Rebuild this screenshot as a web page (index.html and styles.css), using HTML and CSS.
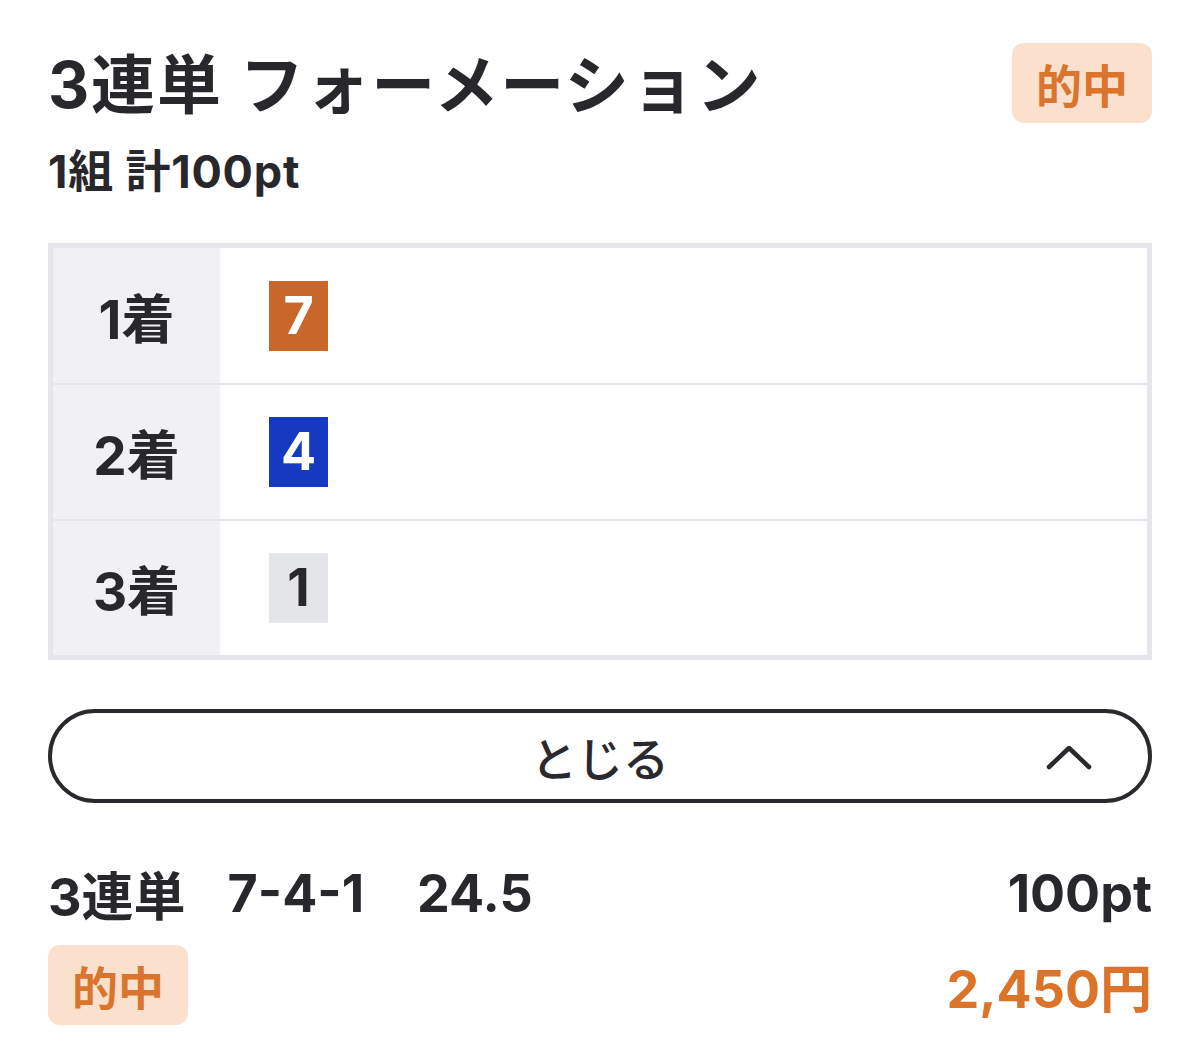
FILE: index.html
```html
<!DOCTYPE html>
<html lang="ja">
<head>
<meta charset="utf-8">
<title>3連単 フォーメーション</title>
<link rel="stylesheet" href="styles.css">
</head>
<body>
<div class="page">
  <div class="head">
    <div class="head-text">
      <h1 class="title">3連単 フォーメーション</h1>
      <p class="sub">1組 計100pt</p>
    </div>
    <span class="badge">的中</span>
  </div>

  <div class="table">
    <div class="row">
      <div class="label">1着</div>
      <div class="cell"><span class="num num-orange">7</span></div>
    </div>
    <div class="row">
      <div class="label">2着</div>
      <div class="cell"><span class="num num-blue">4</span></div>
    </div>
    <div class="row">
      <div class="label">3着</div>
      <div class="cell"><span class="num num-gray">1</span></div>
    </div>
  </div>

  <button class="toggle" type="button">
    <span class="toggle-text">とじる</span>
    <svg class="chev" width="46" height="28" viewBox="0 0 46 28" aria-hidden="true">
      <path d="M3 24 L23 5 L43 24" fill="none" stroke="#2a2a2e" stroke-width="4.5" stroke-linecap="round" stroke-linejoin="round"/>
    </svg>
  </button>

  <div class="result">
    <div class="result-line">
      <span class="r-type">3連単</span>
      <span class="r-combo">7-4-1</span>
      <span class="r-odds">24.5</span>
      <span class="r-pt">100pt</span>
    </div>
    <div class="result-line2">
      <span class="badge">的中</span>
      <span class="payout">2,450円</span>
    </div>
  </div>
</div>
</body>
</html>
```

FILE: styles.css
```css
* { box-sizing: border-box; }
html, body { margin: 0; padding: 0; background: #ffffff; }
body {
  font-family: "Inter", "Noto Sans CJK JP", sans-serif;
  color: #28282c;
}
.page {
  padding: 43px 48px 0 48px;
}
.head {
  display: flex;
  justify-content: space-between;
  align-items: flex-start;
}
.title {
  margin: 0;
  font-size: 64px;
  line-height: 84px;
  font-weight: 700;
  letter-spacing: 1.8px;
}
.sub {
  margin: 20px 0 0 0;
  font-size: 45px;
  line-height: 50px;
  font-weight: 700;
  letter-spacing: 0.8px;
}
.badge {
  display: flex;
  align-items: center;
  justify-content: center;
  width: 140px;
  height: 80px;
  border-radius: 12px;
  background: #fbe1cd;
  color: #d9752c;
  font-family: "Noto Sans CJK JP", sans-serif;
  font-size: 46px;
  font-weight: 700;
  line-height: 1;
}
.table {
  margin-top: 46px;
  border: 5px solid #e5e5ea;
  display: flex;
  flex-direction: column;
}
.row {
  display: flex;
  height: 136px;
  border-top: 2px solid #e5e5ea;
}
.row:first-child {
  height: 135px;
  border-top: none;
}
.label {
  width: 167px;
  background: #f0f0f5;
  display: flex;
  align-items: center;
  justify-content: center;
  font-size: 53px;
  font-weight: 700;
}
.cell {
  flex: 1;
  display: flex;
  align-items: center;
  padding-left: 49px;
}
.num {
  width: 59px;
  height: 70px;
  display: flex;
  align-items: center;
  justify-content: center;
  font-size: 52px;
  font-weight: 700;
  line-height: 1;
}
.num-orange { background: #c9672a; color: #ffffff; }
.num-blue { background: #1539c0; color: #ffffff; }
.num-gray { background: #e4e5e9; color: #28282c; }
.toggle {
  margin-top: 49px;
  width: 100%;
  height: 94px;
  border: 4px solid #2a2a2e;
  border-radius: 47px;
  background: #ffffff;
  display: flex;
  align-items: center;
  justify-content: center;
  position: relative;
  padding: 0;
  font-family: "Noto Sans CJK JP", sans-serif;
  color: #2a2a2e;
}
.toggle-text {
  font-size: 46px;
  font-weight: 500;
  line-height: 1;
}
.chev {
  position: absolute;
  right: 56px;
  top: 30px;
}
.result {
  margin-top: 60px;
}
.result-line {
  display: flex;
  align-items: center;
  height: 60px;
  font-size: 52px;
  font-weight: 700;
}
.r-combo { margin-left: 42px; }
.r-odds { margin-left: 53px; }
.r-pt { margin-left: auto; }
.result-line2 {
  margin-top: 22px;
  display: flex;
  justify-content: space-between;
  align-items: center;
}
.payout {
  font-size: 52px;
  font-weight: 700;
  color: #db7429;
}
```
